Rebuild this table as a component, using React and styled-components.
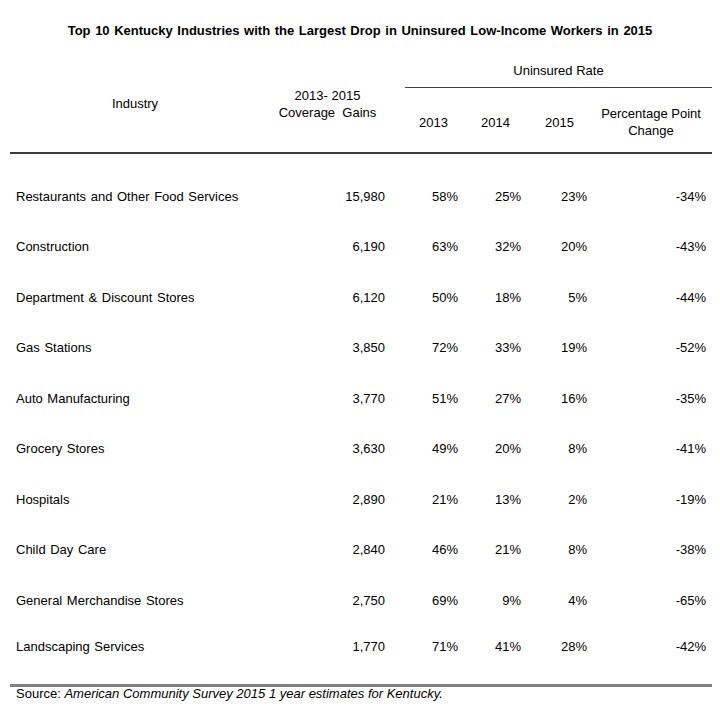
import React from 'react';
import styled, { createGlobalStyle } from 'styled-components';

const rows = [
  ['Restaurants and Other Food Services', '15,980', '58%', '25%', '23%', '-34%'],
  ['Construction', '6,190', '63%', '32%', '20%', '-43%'],
  ['Department & Discount Stores', '6,120', '50%', '18%', '5%', '-44%'],
  ['Gas Stations', '3,850', '72%', '33%', '19%', '-52%'],
  ['Auto Manufacturing', '3,770', '51%', '27%', '16%', '-35%'],
  ['Grocery Stores', '3,630', '49%', '20%', '8%', '-41%'],
  ['Hospitals', '2,890', '21%', '13%', '2%', '-19%'],
  ['Child Day Care', '2,840', '46%', '21%', '8%', '-38%'],
  ['General Merchandise Stores', '2,750', '69%', '9%', '4%', '-65%'],
  ['Landscaping Services', '1,770', '71%', '41%', '28%', '-42%'],
];

export default function App() {
  return (
    <>
      <GlobalStyle />
      <Page>
        <Title>
          Top 10 Kentucky Industries with the Largest Drop in Uninsured Low-Income Workers in 2015
        </Title>
        <Table>
          <Head>
            <IndustryHead>Industry</IndustryHead>
            <GainsHead>
              2013- 2015
              <br />
              Coverage&nbsp; Gains
            </GainsHead>
            <GroupHead>Uninsured Rate</GroupHead>
            <YearHead>2013</YearHead>
            <YearHead>2014</YearHead>
            <YearHead $pr={14}>2015</YearHead>
            <ChangeHead>
              Percentage Point
              <br />
              Change
            </ChangeHead>
          </Head>
          <Body>
            {rows.map((r, i) => (
              <Row key={r[0]} $last={i === rows.length - 1}>
                <NameCell>{r[0]}</NameCell>
                <NumCell>{r[1]}</NumCell>
                <NumCell $pr={1}>{r[2]}</NumCell>
                <NumCell $pr={-1}>{r[3]}</NumCell>
                <NumCell $pr={1}>{r[4]}</NumCell>
                <NumCell $pr={6}>{r[5]}</NumCell>
              </Row>
            ))}
          </Body>
        </Table>
        <Source>
          Source: <em>American Community Survey 2015 1 year estimates for Kentucky.</em>
        </Source>
      </Page>
    </>
  );
}

const GlobalStyle = createGlobalStyle`
  body {
    margin: 0;
    background: #ffffff;
  }
`;

const Page = styled.div`
  width: 720px;
  height: 720px;
  background: #fff;
  color: #000;
  font-family: 'Liberation Sans', Arial, sans-serif;
  font-size: 13px;
  padding-top: 22px;
  box-sizing: border-box;
`;

const Title = styled.div`
  text-align: center;
  font-weight: bold;
  font-size: 13px;
  line-height: 17px;
  word-spacing: 1px;
`;

const Table = styled.div`
  margin: 21px 0 0 10px;
  width: 702px;
`;

const cols = '254px 115px 74px 62px 67px 124px';

const Head = styled.div`
  display: grid;
  grid-template-columns: ${cols};
  grid-template-rows: 28px 64px;
  padding-left: 6px;
  border-bottom: 2px solid #3c3c3c;
  line-height: 17px;
`;

const IndustryHead = styled.div`
  grid-row: 1 / 3;
  grid-column: 1;
  display: flex;
  align-items: center;
  justify-content: center;
  padding: 0 16px 6px 0;
`;

const GainsHead = styled.div`
  grid-row: 1 / 3;
  grid-column: 2;
  display: flex;
  align-items: center;
  justify-content: center;
  text-align: center;
  padding-bottom: 5px;
  margin: 0 -20px;
`;

const GroupHead = styled.div`
  grid-row: 1;
  grid-column: 3 / 7;
  margin-left: 20px;
  display: flex;
  align-items: center;
  justify-content: center;
  padding-bottom: 6px;
  border-bottom: 1.5px solid #404040;
`;

const YearHead = styled.div`
  grid-row: 2;
  display: flex;
  align-items: center;
  justify-content: flex-end;
  padding-right: ${(p) => p.$pr ?? 11}px;
  padding-top: 4px;
`;

const ChangeHead = styled.div`
  grid-row: 2;
  grid-column: 6;
  display: flex;
  align-items: center;
  justify-content: center;
  text-align: center;
  padding: 4px 0 0 2px;
`;

const Body = styled.div`
  padding: 17px 0 17px;
  border-bottom: 3px solid #808080;
`;

const Row = styled.div`
  display: grid;
  grid-template-columns: ${cols};
  align-items: center;
  padding-left: 6px;
  height: ${(p) => (p.$last ? 41 : 50.5)}px;
  word-spacing: 1px;
`;

const NameCell = styled.div`
  white-space: nowrap;
`;

const NumCell = styled.div`
  text-align: right;
  padding-right: ${(p) => p.$pr ?? 0}px;
`;

const Source = styled.div`
  padding: 0 0 0 16px;
  line-height: 14px;
  em {
    font-style: italic;
  }
`;
